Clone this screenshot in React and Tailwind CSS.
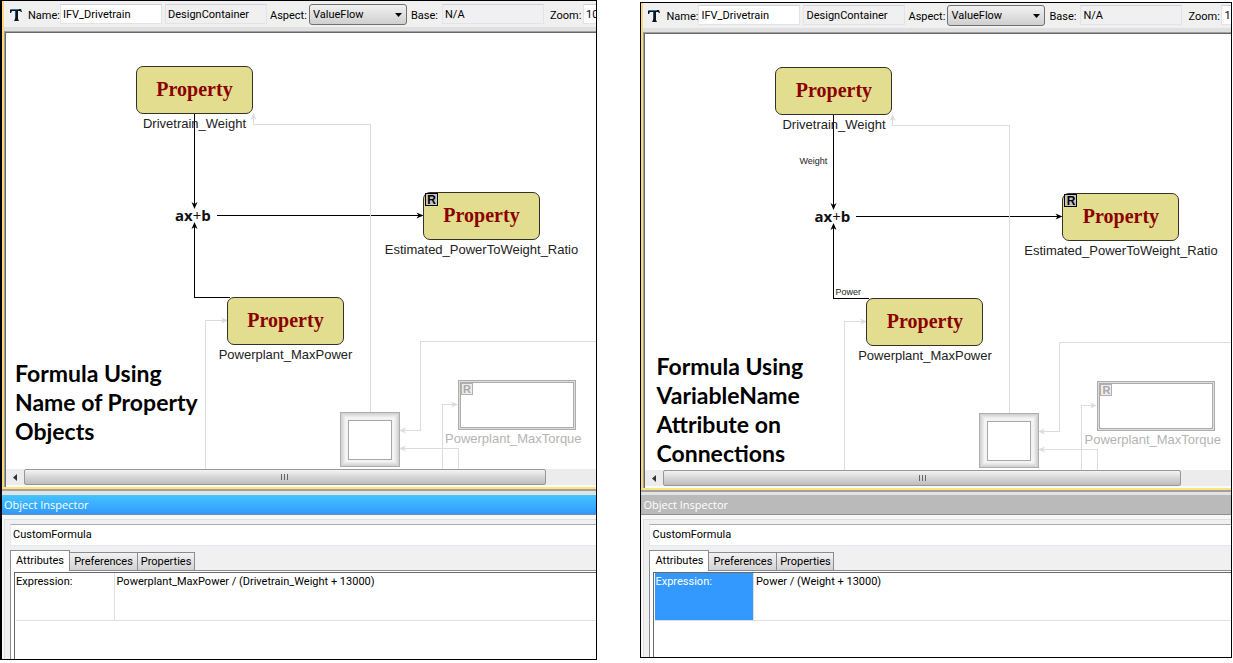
import React, { useState } from "react";

function PropertyNode({ name, className, badge }) {
  return (
    <div className={`absolute flex w-[117px] flex-col items-center ${className}`}>
      <div className="relative flex h-12 w-full items-center justify-center rounded-[7px] border border-[#33332a] bg-[#e2dd8f] pb-[2px] font-['Liberation_Serif',serif] text-[20px] leading-none font-bold text-[#8b0000]">
        Property
        {badge && (
          <span className="absolute top-0 left-px flex size-[13px] items-center justify-center border border-black bg-[#c4c4c0] font-['Liberation_Sans',sans-serif] text-[12px] leading-none font-bold text-black">
            R
          </span>
        )}
      </div>
      <span className="mt-[2px] text-[13px] leading-4 whitespace-nowrap text-[#222]">{name}</span>
    </div>
  );
}

function Connectors() {
  return (
    <svg
      className="absolute top-0 left-0"
      width="640"
      height="436"
      viewBox="6 33 640 436"
      fill="none"
      shapeRendering="crispEdges"
      aria-hidden="true"
    >
      <g stroke="#000">
        <path d="M194.500 113V207" />
        <path d="M217 215.500H422" />
        <path d="M230 297.500H194.500V224" />
      </g>
      <g fill="#000" shapeRendering="auto">
        <path d="M194.500 209l-3-7 3 2 3-2z" />
        <path d="M194.500 222l-3 7 3-2 3 2z" />
        <path d="M423.500 215.500l-7-3 2 3-2 3z" />
      </g>
      <g stroke="#dcdcdc">
        <path d="M370.500 412V124.500H253.500V117" />
        <path d="M205.500 469V320.500H224" />
        <path d="M646 341.500H420.500V430.500H402" />
        <path d="M442.500 469V404.500H455" />
        <path d="M458.500 469V448.500H402" />
      </g>
      <g fill="#dcdcdc" shapeRendering="auto">
        <path d="M253.500 113l-3 7 3-2 3 2z" />
        <path d="M228 320.500l-7-3 2 3-2 3z" />
        <path d="M399 430.500l7-3-2 3 2 3z" />
        <path d="M458 404.500l-7-3 2 3-2 3z" />
        <path d="M399 448.500l7-3-2 3 2 3z" />
      </g>
      <rect x="340.500" y="412.500" width="59" height="54" fill="#d2d2d2" stroke="#adadad" />
      <rect x="342" y="414" width="56" height="51" fill="#dadada" />
      <rect x="343" y="415" width="54" height="49" fill="#e2e2e2" />
      <rect x="344" y="416" width="52" height="47" fill="#eaeaea" />
      <rect x="345" y="417" width="50" height="45" fill="#f3f3f3" />
      <rect x="348.500" y="420.500" width="43" height="39" fill="#fff" stroke="#a8a8a8" />
      <rect x="458.500" y="380.500" width="117" height="49" fill="#dcdcdc" stroke="#adadad" />
      <rect x="460.500" y="382.500" width="113" height="45" fill="#fff" stroke="#adadad" />
    </svg>
  );
}

function Diagram({ caption, captionClass, variables }) {
  return (
    <div className="relative h-[436px] overflow-hidden bg-white font-['Liberation_Sans',Arial,sans-serif]">
      <Connectors />
      <PropertyNode name="Drivetrain_Weight" className="top-[33px] left-[130px]" />
      <PropertyNode
        name="Estimated_PowerToWeight_Ratio"
        className="top-[159px] left-[417px]"
        badge
      />
      <PropertyNode name="Powerplant_MaxPower" className="top-[264px] left-[221px]" />
      <span className="absolute top-[174px] left-[169px] font-['Open_Sans',sans-serif] text-[15px] leading-4 font-bold text-[#111]">
        ax<span className="font-normal">+</span>b
      </span>
      <span className="absolute top-[350px] left-[455px] flex size-3 items-center justify-center border border-[#b0b0b0] bg-[#ececec] text-[11px] leading-none font-bold text-[#a8a8a8]">
        R
      </span>
      <span className="absolute top-[398px] left-[439px] text-[13px] leading-4 text-[#b4b4b4]">
        Powerplant_MaxTorque
      </span>
      {variables && (
        <>
          <span className="absolute top-[121px] left-[154px] text-[9px] leading-3 text-[#222]">
            Weight
          </span>
          <span className="absolute top-[252px] left-[190px] text-[9px] leading-3 text-[#222]">
            Power
          </span>
        </>
      )}
      <p
        className={`absolute font-['Lato',sans-serif] text-[23px] leading-[29px] font-bold text-black ${captionClass}`}
      >
        {caption.map((line) => (
          <span key={line} className="block whitespace-nowrap">
            {line}
          </span>
        ))}
      </p>
    </div>
  );
}

const fieldClass =
  "h-5 w-[102px] shrink-0 border border-[#e2e3ea] border-t-[#cfd0d8] px-[2px] text-[11px] leading-4 outline-none";

function Toolbar({ id, className }) {
  return (
    <div
      className={`flex items-start overflow-hidden border-b-4 border-[#e0e0e0] bg-[#f0f0f0] pb-[3px] ${className}`}
    >
      <svg className="mt-1 mr-[6px] shrink-0" width="12" height="14" viewBox="0 0 12 14" aria-hidden="true">
        <path d="M0 2L1 1H11L12 4H11L10 3H8V11L9 13H4L5 11V3H2L1 5H0Z" fill="#10141c" />
        <path d="M5 3H8V13H5Z" fill="#10141c" />
        <path d="M1 1H9V2H1Z" fill="#2b7f92" />
        <path d="M5 3H6V10H5Z" fill="#2c4f86" />
      </svg>
      <label htmlFor={`${id}-name`} className="mt-1 w-8 shrink-0">
        Name:
      </label>
      <input id={`${id}-name`} defaultValue="IFV_Drivetrain" className={`mr-[3px] bg-white ${fieldClass}`} />
      <input
        aria-label="Kind"
        readOnly
        value="DesignContainer"
        className={`mr-[3px] bg-[#f0f0f0] ${fieldClass}`}
      />
      <label htmlFor={`${id}-aspect`} className="mt-1 w-[39px] shrink-0">
        Aspect:
      </label>
      <div className="relative mr-1 shrink-0">
        <select
          id={`${id}-aspect`}
          className="h-[21px] w-[98px] appearance-none rounded-[3px] border border-[#707070] bg-linear-to-b from-[#f2f2f2] to-[#cfcfcf] px-[3px] text-[11px] leading-4"
        >
          <option>ValueFlow</option>
        </select>
        <svg
          className="pointer-events-none absolute top-[9px] right-[5px]"
          width="7"
          height="4"
          viewBox="0 0 7 4"
          aria-hidden="true"
        >
          <path d="M0 0H7L3.500 4Z" fill="#000" />
        </svg>
      </div>
      <label htmlFor={`${id}-base`} className="mt-1 w-[31px] shrink-0">
        Base:
      </label>
      <input id={`${id}-base`} readOnly value="N/A" className={`mr-[6px] bg-[#f0f0f0] ${fieldClass}`} />
      <label htmlFor={`${id}-zoom`} className="mt-1 w-[33px] shrink-0">
        Zoom:
      </label>
      <input id={`${id}-zoom`} defaultValue="100%" className={`bg-white ${fieldClass}`} />
    </div>
  );
}

function ScrollBar() {
  return (
    <div className="flex h-4 bg-[#ececec]">
      <button type="button" aria-label="Scroll left" className="flex w-[18px] shrink-0 items-center justify-center">
        <svg width="4" height="7" viewBox="0 0 4 7" aria-hidden="true">
          <path d="M4 0V7L0 3.500Z" fill="#333" />
        </svg>
      </button>
      <div className="flex flex-[521] items-center justify-center gap-[2px] rounded-[2px] border border-[#979797] bg-linear-to-b from-[#f4f4f4] via-[#d6d6d6] to-[#bdbdbd]">
        <span className="h-[6px] w-px bg-[#666]" />
        <span className="h-[6px] w-px bg-[#666]" />
        <span className="h-[6px] w-px bg-[#666]" />
      </div>
      <div className="flex-[51]" />
    </div>
  );
}

const TABS = ["Attributes", "Preferences", "Properties"];

function Inspector({ active, expression }) {
  const [tab, setTab] = useState("Attributes");
  return (
    <section className="flex flex-1 flex-col bg-[#f8f8f8]">
      <h2
        className={`flex h-5 items-center border-b pl-[2px] font-['Open_Sans',sans-serif] text-[11px] leading-4 text-white ${
          active
            ? "border-[#6f8fae] bg-linear-to-b from-[#44c4ff] to-[#3399ff]"
            : "border-[#8f8f8f] bg-[#bababa]"
        }`}
      >
        Object Inspector
      </h2>
      <div className="mt-[4px] ml-[2px] flex flex-1 flex-col border-t border-l border-[#dedede] bg-[#f0f0f0] pt-1 pl-[5px]">
        <input
          aria-label="Object name"
          defaultValue="CustomFormula"
          className="h-[22px] border border-r-0 border-[#e2e8ee] border-t-[#abadb3] bg-white px-[2px] pb-[2px] text-[11px] leading-4 outline-none"
        />
        <div role="tablist" className="mt-[4px] flex h-5 items-end">
          {TABS.map((t) => (
            <button
              key={t}
              type="button"
              role="tab"
              aria-selected={t === tab}
              onClick={() => setTab(t)}
              className={
                t === tab
                  ? "relative -mb-px h-[21px] w-[60px] border border-b-0 border-[#898c95] bg-white pb-px leading-4"
                  : "h-[18px] w-[68px] border border-b-0 border-l-0 border-[#898c95] bg-linear-to-b from-[#f2f2f2] to-[#d2d2d2] pt-px leading-4 last:w-[57px]"
              }
            >
              {t}
            </button>
          ))}
        </div>
        <div className="flex flex-1 flex-col border-t border-l border-[#898c95] bg-white pt-px pl-[3px]">
          <div className="flex-1 border-t border-l border-[#696969] pl-px">
            <table className="w-full table-fixed border-collapse">
              <tbody>
                <tr className="h-[47px] align-top">
                  <th
                    scope="row"
                    className={`w-[98px] border-r border-b border-[#dfdfdf] pt-px text-left leading-4 font-normal ${
                      active ? "" : "bg-[#3399ff] text-white"
                    }`}
                  >
                    Expression:
                  </th>
                  <td className="border-b border-[#dfdfdf] pt-px pl-[2px] leading-4 whitespace-nowrap">{expression}</td>
                </tr>
              </tbody>
            </table>
          </div>
        </div>
      </div>
    </section>
  );
}

function Editor({ id, className, toolbarClass, splitClass, active, expression, ...diagram }) {
  return (
    <article className={`flex min-w-0 flex-col overflow-hidden border border-black ${className}`}>
      <div className="border-b-2 border-l-2 border-b-[#fde57c] border-l-[#fcd77c]">
        <Toolbar id={id} className={toolbarClass} />
        <div className="border-t border-l border-[#a0a0a0]">
          <div className="border-t border-l border-[#696969] bg-[#fafafa] pb-[2px]">
            <Diagram {...diagram} />
            <ScrollBar />
          </div>
        </div>
      </div>
      <div className={`border-t-2 border-[#a0a0a0] bg-[#e3e3e3] ${splitClass}`} />
      <Inspector active={active} expression={expression} />
    </article>
  );
}

export default function App() {
  return (
    <main className="flex min-h-[663px] items-start gap-[43px] bg-white pr-px font-['Roboto','Liberation_Sans',sans-serif] text-[11px] leading-4 text-black">
      <Editor
        id="left"
        className="min-h-[660px] flex-[597] border-l-2"
        toolbarClass="h-[30px] pt-[3px] pl-[6px]"
        splitClass="h-[6px]"
        active
        expression="Powerplant_MaxPower / (Drivetrain_Weight + 13000)"
        caption={["Formula Using", "Name of Property", "Objects"]}
        captionClass="top-[326px] left-[9px]"
      />
      <Editor
        id="right"
        className="mt-[2px] min-h-[656px] flex-[592]"
        toolbarClass="h-[29px] pt-[2px] pl-[5px]"
        splitClass="h-[5px]"
        expression="Power / (Weight + 13000)"
        caption={["Formula Using", "VariableName", "Attribute on", "Connections"]}
        captionClass="top-[318px] left-[11px]"
        variables
      />
    </main>
  );
}
